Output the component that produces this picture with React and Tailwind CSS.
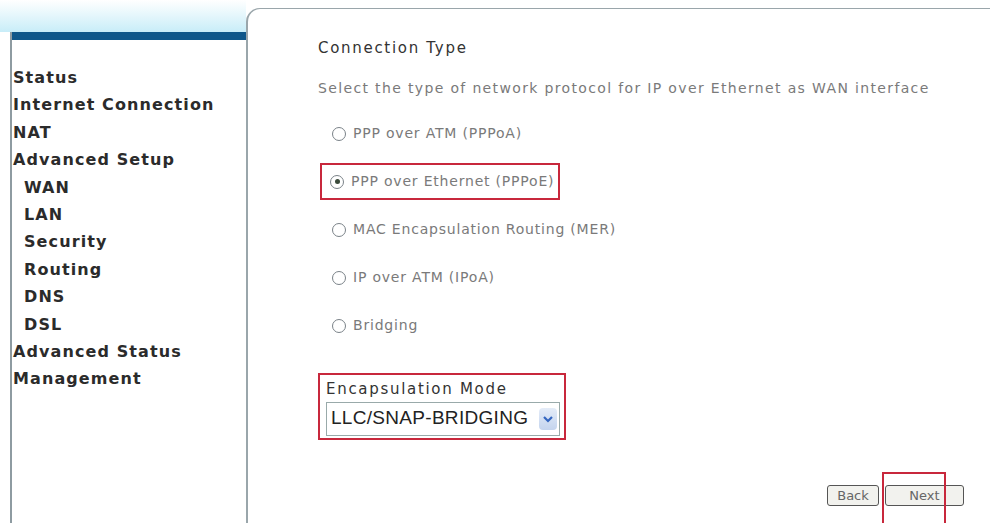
import React, { useState } from "react";

const menu = [
  { label: "Status" },
  { label: "Internet Connection" },
  { label: "NAT" },
  { label: "Advanced Setup" },
  { label: "WAN", sub: true },
  { label: "LAN", sub: true },
  { label: "Security", sub: true },
  { label: "Routing", sub: true },
  { label: "DNS", sub: true },
  { label: "DSL", sub: true },
  { label: "Advanced Status" },
  { label: "Management" },
];

const options = [
  "PPP over ATM (PPPoA)",
  "PPP over Ethernet (PPPoE)",
  "MAC Encapsulation Routing (MER)",
  "IP over ATM (IPoA)",
  "Bridging",
];

const Radio = ({ checked }) => (
  <span className="flex h-[14px] w-[14px] items-center justify-center rounded-full border border-[#7a8288] bg-white">
    {checked && <span className="h-[5px] w-[5px] rounded-full bg-[#3a4a3a]" />}
  </span>
);

export default function App() {
  const [selected, setSelected] = useState(1);

  return (
    <div className="flex h-[523px] w-[990px] overflow-hidden bg-white font-['DejaVu_Sans',sans-serif]">
      {/* left menu */}
      <div className="flex w-[246px] flex-col">
        <div className="h-[32px] bg-gradient-to-b from-white to-[#c8edf8]" />
        <div className="ml-[10px] flex flex-1 flex-col border-l-2 border-[#8e9ba1]">
          <div className="h-[8px] bg-[#0f578a]" />
          <div className="flex flex-col pt-[24px] pl-[1px]">
            {menu.map((m) => (
              <div
                key={m.label}
                className={`h-[27.4px] text-[16px] leading-[27px] font-bold tracking-[1.1px] text-[#2b2b2b] ${m.sub ? "pl-[11px]" : ""}`}
              >
                {m.label}
              </div>
            ))}
          </div>
        </div>
      </div>

      {/* content panel */}
      <div className="mt-[8px] flex flex-1 flex-col rounded-tl-[14px] border-t border-l-2 border-[#9aa6ab]">
        <div className="flex flex-1 flex-col pl-[70px]">
          <div className="mt-[28px] text-[15px] tracking-[1.7px] text-[#333]">Connection Type</div>
          <div className="mt-[18px] text-[14px] tracking-[1.35px] text-[#7a7a7a]">
            Select the type of network protocol for IP over Ethernet as WAN interface
          </div>

          <div className="mt-[11px] flex flex-col">
            {options.map((o, i) => (
              <div key={o} className="flex h-[48px] items-center">
                <button
                  onClick={() => setSelected(i)}
                  className={`flex items-center gap-[7px] border-2 py-[6px] pr-[4px] ${
                    i === selected ? "ml-[2px] border-[#c8283c] pl-[8px]" : "border-transparent pl-[12px]"
                  }`}
                >
                  <Radio checked={i === selected} />
                  <span className="text-[14px] tracking-[0.8px] text-[#7a7a7a]">{o}</span>
                </button>
              </div>
            ))}
          </div>

          <div className="mt-[23px] flex w-[248px] flex-col border-2 border-[#c8283c] px-[6px] pt-[4px] pb-[2px]">
            <div className="text-[15px] leading-[20px] tracking-[1.7px] text-[#333]">Encapsulation Mode</div>
            <div className="mt-[3px] flex h-[34px] w-[234px] items-center border border-[#9aa] bg-white pl-[4px]">
              <span className="flex-1 font-['Liberation_Sans',sans-serif] text-[19px] tracking-[0.3px] text-[#222]">LLC/SNAP-BRIDGING</span>
              <span className="mr-[2px] flex h-[22px] w-[18px] items-center justify-center rounded-sm bg-gradient-to-b from-[#e4ecf8] to-[#c4d4ee]">
                <svg width="10" height="8" viewBox="0 0 10 8">
                  <path d="M1 2 L5 6 L9 2" fill="none" stroke="#3466c0" strokeWidth="2.2" />
                </svg>
              </span>
            </div>
          </div>

          <div className="mt-auto mb-[16px] flex items-center justify-end pr-[26px]">
            <button className="h-[21px] w-[52px] rounded-[3px] border border-[#555] bg-[#f2f2ee] text-[13px] text-[#666]">
              Back
            </button>
            <div className="relative ml-[6px]">
              <div className="pointer-events-none absolute -top-[11px] -left-[3px] h-[60px] w-[64px] border-2 border-[#c8283c]" />
              <button className="h-[21px] w-[79px] rounded-[3px] border border-[#555] bg-[#f2f2ee] text-[13px] text-[#666]">
                Next
              </button>
            </div>
          </div>
        </div>
      </div>
    </div>
  );
}
